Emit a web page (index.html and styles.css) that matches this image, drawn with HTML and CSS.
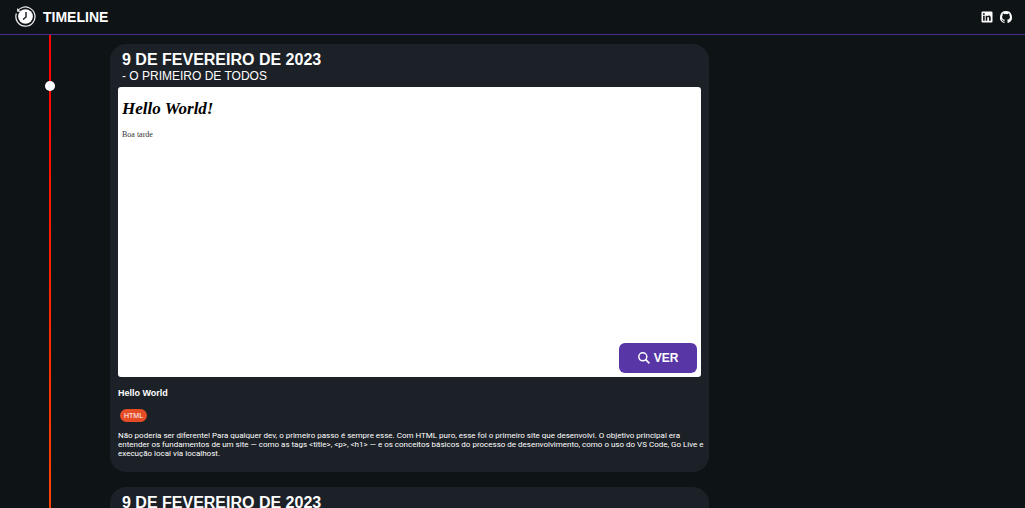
FILE: index.html
```html
<!DOCTYPE html>
<html lang="pt-BR">
<head>
<meta charset="utf-8">
<meta name="viewport" content="width=device-width, initial-scale=1">
<title>Timeline</title>
<link rel="stylesheet" href="styles.css">
</head>
<body>
<header class="topbar">
  <div class="brand">
    <svg class="brand-icon" viewBox="0 0 20 20" aria-hidden="true">
      <path d="M1.300 7.200A9.100 9.100 0 1 0 5.200 2.300" fill="none" stroke="#eee" stroke-width="1.200"/>
      <path d="M5.200 2.300A9.100 9.100 0 0 0 2.800 4.500M2.500 2.300v2.600h2.600" fill="none" stroke="#eee" stroke-width="1"/>
      <circle cx="10" cy="10" r="7" fill="#fff"/>
      <path d="M10.500 5.600v4.800L7.700 12.900" fill="none" stroke="#0f1417" stroke-width="1.300"/>
    </svg>
    <h1 class="brand-name">TIMELINE</h1>
  </div>
  <nav class="social">
    <a href="#" class="social-link" aria-label="LinkedIn">
      <svg viewBox="0 0 14 14"><path fill="#fff" fill-rule="evenodd" d="M2.500 1.500h9q1 0 1 1v9q0 1-1 1h-9q-1 0-1-1v-9q0-1 1-1zM3.100 5.700v5.100h1.600V5.700zM3.900 3.100a.9.900 0 1 0 0 1.800.9.900 0 0 0 0-1.800zM5.700 5.700v5.100h1.600V8.200c0-1.500 1.700-1.500 1.700 0v2.600h1.700V7.700c0-2.400-2.400-2.600-3.400-1.300v-.7z"/></svg>
    </a>
    <a href="#" class="social-link" aria-label="GitHub">
      <svg viewBox="0 0 16 16"><path fill="#fff" d="M8 1.200a7 7 0 0 0-2.200 13.600c.35.07.48-.15.48-.34v-1.200c-1.950.430-2.360-.940-2.360-.940-.320-.800-.780-1.020-.780-1.020-.640-.440.050-.430.050-.430.700.050 1.070.720 1.070.720.630 1.070 1.650.760 2.040.580.070-.450.250-.760.450-.940-1.560-.180-3.200-.780-3.200-3.460 0-.760.280-1.400.730-1.880-.080-.180-.320-.900.060-1.860 0 0 .600-.200 1.930.720a6.700 6.700 0 0 1 3.500 0c1.340-.920 1.930-.720 1.930-.720.380.970.140 1.680.070 1.860.450.490.720 1.120.720 1.880 0 2.690-1.640 3.280-3.200 3.450.250.220.470.640.470 1.300v1.920c0 .190.130.400.480.340A7 7 0 0 0 8 1.200z"/></svg>
    </a>
  </nav>
</header>
<main class="timeline">
  <div class="rail" aria-hidden="true"><span class="rail-dot"></span></div>
  <div class="entries">
    <article class="card">
      <header class="card-head">
        <h2 class="card-date">9 DE FEVEREIRO DE 2023</h2>
        <p class="card-subtitle">- O PRIMEIRO DE TODOS</p>
      </header>
      <div class="preview">
        <div class="preview-page">
          <p class="preview-title">Hello World!</p>
          <p class="preview-text">Boa tarde</p>
        </div>
        <button class="view-button" type="button">
          <svg class="view-icon" viewBox="0 0 12 12" aria-hidden="true"><circle cx="4.800" cy="4.800" r="4" fill="none" stroke="#fff" stroke-width="1.500"/><path d="m7.700 7.700 3.700 3.700" stroke="#fff" stroke-width="1.700"/></svg>
          VER
        </button>
      </div>
      <h3 class="card-title">Hello World</h3>
      <span class="tag">HTML</span>
      <p class="card-text">Não poderia ser diferente! Para qualquer dev, o primeiro passo é sempre esse. Com HTML puro, esse foi o primeiro site que desenvolvi. O objetivo principal era entender os fundamentos de um site — como as tags &lt;title&gt;, &lt;p&gt;, &lt;h1&gt; — e os conceitos básicos do processo de desenvolvimento, como o uso do VS Code, Go Live e execução local via localhost.</p>
    </article>
    <article class="card">
      <header class="card-head">
        <h2 class="card-date">9 DE FEVEREIRO DE 2023</h2>
      </header>
    </article>
  </div>
</main>
</body>
</html>
```
FILE: styles.css
```css
* { box-sizing: border-box; margin: 0; padding: 0; }

body {
  display: flex;
  flex-direction: column;
  height: 100vh;
  overflow: hidden;
  background: #0e1316;
  color: #fff;
  font-family: "Liberation Sans", Arial, sans-serif;
}

.topbar {
  display: flex;
  flex: none;
  align-items: center;
  justify-content: space-between;
  padding: 6px 12px 7px 15px;
  border-bottom: 1px solid #4b2c91;
}

.brand { display: flex; align-items: center; gap: 7px; }
.brand-icon { width: 21px; height: 21px; }
.brand-name { font-size: 14px; line-height: 16px; }
.social { display: flex; gap: 5px; }
.social-link { display: block; width: 14px; height: 14px; }
.social-link svg { display: block; width: 100%; height: 100%; }

.timeline {
  display: grid;
  flex: 1;
  grid-template-columns: 110px minmax(0, 599px);
  min-height: 0;
  overflow: auto;
  scrollbar-width: none;
}

.rail {
  display: flex;
  justify-content: center;
  width: 2px;
  margin-left: 49px;
  background: linear-gradient(#ff0000, #ff4500);
}

.rail-dot {
  flex: none;
  width: 10px;
  height: 10px;
  margin-top: 46px;
  border-radius: 50%;
  background: #fff;
}

.entries { display: flex; flex-direction: column; gap: 15px; padding-top: 9px; }

.card {
  padding: 8px 8px 14px;
  border-radius: 16px;
  background: #1c2127;
}

.card-head { padding: 0 4px 3px; }
.card-date { font-size: 16px; line-height: 16px; }
.card-subtitle { font-size: 12px; line-height: 16px; }

.preview {
  display: flex;
  flex-direction: column;
  justify-content: space-between;
  height: 290px;
  padding: 4px;
  border-radius: 3px;
  background: #fff;
}

.preview-page { padding-top: 8px; color: #000; font-family: "Liberation Serif", "Times New Roman", serif; }
.preview-title { font-size: 17px; line-height: 20px; font-weight: bold; font-style: italic; }
.preview-text { margin-top: 8px; font-size: 8px; line-height: 16px; color: #333; }

.view-button {
  display: flex;
  align-items: center;
  justify-content: center;
  align-self: flex-end;
  gap: 4px;
  width: 78px;
  height: 30px;
  border: 0;
  border-radius: 6px;
  background: #5836a5;
  color: #fff;
  font: bold 12px "Liberation Sans", Arial, sans-serif;
}

.view-icon { width: 12px; height: 12px; }
.card-title { margin: 10px 0; font-size: 9px; line-height: 12px; }

.tag {
  display: block;
  width: fit-content;
  margin-left: 2px;
  padding: 0 4px;
  border-radius: 7px;
  background: #e44d26;
  font-size: 7px;
  line-height: 13px;
}

.card-text {
  margin: 9px -6px 0 0;
  font-family: Roboto, "Liberation Sans", sans-serif;
  font-size: 8px;
  line-height: 9px;
}
```
